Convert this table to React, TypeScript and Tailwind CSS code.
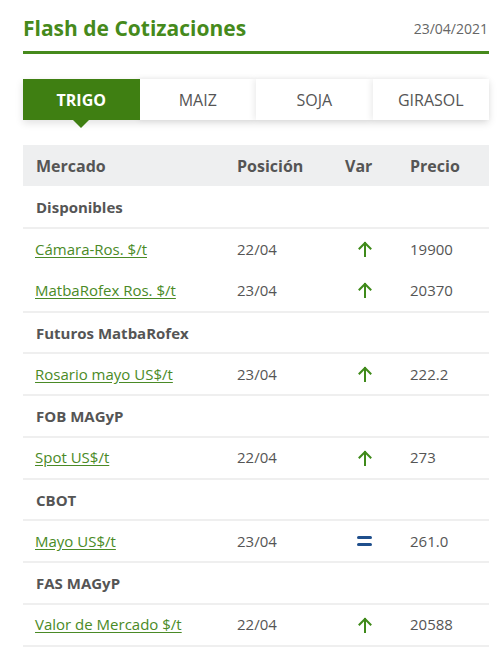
import React from "react";

type Row = { kind: "section"; label: string } | { kind: "data"; label: string; pos: string; varKind: "up" | "eq"; price: string; last?: boolean };

const rows: Row[] = [
    { kind: "section", label: "Disponibles" },
    { kind: "data", label: "Cámara-Ros. $/t", pos: "22/04", varKind: "up", price: "19900" },
    { kind: "data", label: "MatbaRofex Ros. $/t", pos: "23/04", varKind: "up", price: "20370", last: true },
    { kind: "section", label: "Futuros MatbaRofex" },
    { kind: "data", label: "Rosario mayo US$/t", pos: "23/04", varKind: "up", price: "222.2", last: true },
    { kind: "section", label: "FOB MAGyP" },
    { kind: "data", label: "Spot US$/t", pos: "22/04", varKind: "up", price: "273", last: true },
    { kind: "section", label: "CBOT" },
    { kind: "data", label: "Mayo US$/t", pos: "23/04", varKind: "eq", price: "261.0", last: true },
    { kind: "section", label: "FAS MAGyP" },
    { kind: "data", label: "Valor de Mercado $/t", pos: "22/04", varKind: "up", price: "20588", last: true },
];

function UpArrow() {
    return (
        <svg width="16" height="16" viewBox="0 0 16 16" fill="none" stroke="#3f8a1a" strokeWidth="2" strokeLinecap="square">
            <path d="M8 15V2" />
            <path d="M2.5 7.5L8 2l5.5 5.5" />
        </svg>
    );
}

function EqualSign() {
    return (
        <div className="flex flex-col gap-[4px] w-[15px]">
            <span className="h-[3px] bg-[#1f4f8c] rounded-sm" />
            <span className="h-[3px] bg-[#1f4f8c] rounded-sm" />
        </div>
    );
}

const tabs = ["TRIGO", "MAIZ", "SOJA", "GIRASOL"];

export default function App() {
    return (
        <div className="min-h-screen bg-white w-full font-['Open_Sans',sans-serif] text-[#555] pl-[23px] pr-[10px] pt-[14px]">
            <header className="flex justify-between items-center pb-[9px] border-b-[3px] border-[#468a1c]">
                <h1 className="text-[21px] font-bold text-[#468a1c] leading-[28px]">Flash de Cotizaciones</h1>
                <span className="text-[14px] text-[#666] pr-[1px]">23/04/2021</span>
            </header>

            <nav className="grid grid-cols-4 mt-[25px] shadow-[0_3px_8px_rgba(0,0,0,0.12)]">
                {tabs.map((t, i) =>
                    i === 0 ? (
                        <div key={t} className="relative h-[41px] bg-[#3f7f12] text-white font-bold text-[16px] flex items-center justify-center">
                            {t}
                            <span className="absolute left-1/2 -translate-x-1/2 top-full w-0 h-0 border-l-[8px] border-r-[8px] border-t-[8px] border-l-transparent border-r-transparent border-t-[#3f7f12]" />
                        </div>
                    ) : (
                        <div key={t} className="h-[41px] bg-white text-[16px] text-[#555] flex items-center justify-center shadow-[-2px_0_6px_rgba(0,0,0,0.08)]">
                            {t}
                        </div>
                    )
                )}
            </nav>

            <table className="w-full mt-[25px] border-collapse text-[15px]">
                <thead>
                    <tr className="bg-[#eeeff0] h-[41px] text-[16px] font-bold text-[#555]">
                        <th className="text-left pl-[13px] font-bold">Mercado</th>
                        <th className="text-left font-bold w-[108px]">Posición</th>
                        <th className="text-left font-bold w-[65px]">Var</th>
                        <th className="text-left font-bold w-[79px]">Precio</th>
                    </tr>
                </thead>
                <tbody>
                    {rows.map((r, i) =>
                        r.kind === "section" ? (
                            <tr key={i} className="h-[41.5px] border-b-2 border-[#efefef]">
                                <td colSpan={4} className="pl-[13px] pt-[1px] font-bold text-[#555]">{r.label}</td>
                            </tr>
                        ) : (
                            <tr key={i} className={`h-[42px] ${r.last ? "border-b-2 border-[#efefef]" : ""}`}>
                                <td className="pl-[12px]">
                                    <a href="#" className="text-[#4a8a26] underline underline-offset-2">{r.label}</a>
                                </td>
                                <td className="text-[#555]">{r.pos}</td>
                                <td>
                                    <div className="pl-[12px] flex items-center">
                                        {r.varKind === "up" ? <UpArrow /> : <EqualSign />}
                                    </div>
                                </td>
                                <td className="text-[#555]">{r.price}</td>
                            </tr>
                        )
                    )}
                </tbody>
            </table>
        </div>
    );
}
